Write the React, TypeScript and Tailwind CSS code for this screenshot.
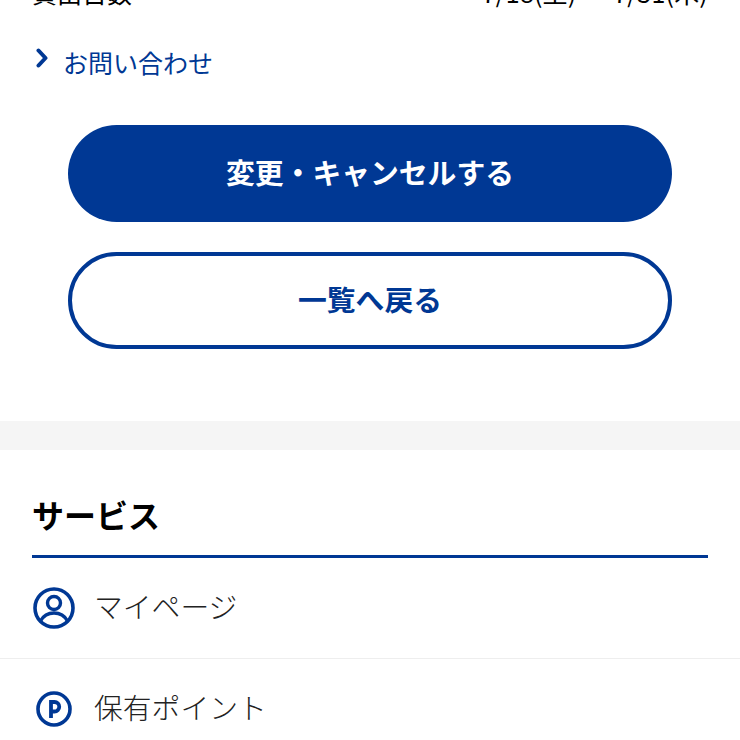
const font = { fontFamily: '"Noto Sans CJK JP", "Noto Sans", sans-serif' };

function ChevronIcon() {
  return (
    <svg width="14" height="20" viewBox="0 0 14 20" fill="none" className="mb-[8px] shrink-0">
      <path d="M3.500 2.500l7 7.500-7 7.500" stroke="#003894" strokeWidth="4" strokeLinecap="round" strokeLinejoin="round" />
    </svg>
  );
}

function UserIcon() {
  return (
    <svg width="42" height="42" viewBox="0 0 42 42" fill="none">
      <circle cx="21" cy="21" r="19" stroke="#003894" strokeWidth="3.600" />
      <circle cx="21" cy="16" r="6.500" stroke="#003894" strokeWidth="3.400" />
      <path d="M7.500 34c3-5.500 8-8 13.500-8s10.500 2.500 13.500 8" stroke="#003894" strokeWidth="3.400" />
    </svg>
  );
}

function PointIcon() {
  return (
    <svg width="36" height="36" viewBox="0 0 36 36" fill="none">
      <circle cx="18" cy="18" r="16" stroke="#003894" strokeWidth="3.600" />
      <path d="M15 27V11h3.500a4.500 4.500 0 0 1 0 9.500H15" stroke="#003894" strokeWidth="3.800" />
    </svg>
  );
}

export default function App() {
  return (
    <div className="h-[740px] w-[740px] overflow-hidden bg-white" style={font}>
      <div className="-mt-[20px] flex justify-between px-8 text-[25px] leading-[24px] text-black">
        <span>貸出日数</span>
        <span className="tracking-[0.2px]">7/18(土) ～ 7/31(木)</span>
      </div>

      <div className="mt-[41px] flex items-center gap-[14px] pl-[35px]">
        <ChevronIcon />
        <span className="text-[25px] leading-[34px] text-[#003894]">お問い合わせ</span>
      </div>

      <div className="mt-[46px] flex flex-col gap-[30px] px-[68px]">
        <button className="h-[97px] rounded-[49px] bg-[#003894] pb-[4px] text-[28.800px] font-bold text-white">
          変更・キャンセルする
        </button>
        <button className="h-[97px] rounded-[49px] border-4 border-[#003894] bg-white pb-[4px] text-[28.800px] font-bold text-[#003894]">
          一覧へ戻る
        </button>
      </div>

      <div className="mt-[72px] h-[29px] bg-[#f5f5f5]" />

      <div className="px-8">
        <h2 className="border-b-[3px] border-[#003894] pt-[40px] pb-[17px] text-[32px] leading-[48px] font-bold text-black">
          サービス
        </h2>
      </div>

      <div className="flex h-[101px] items-center gap-[19px] border-b border-[#eeeeee] pl-[33px]">
        <UserIcon />
        <span className="pb-[4px] text-[28.800px] font-light text-[#222222]">マイページ</span>
      </div>
      <div className="flex h-[100px] items-center gap-[22px] pl-[36px]">
        <PointIcon />
        <span className="pb-[4px] text-[28.800px] font-light text-[#222222]">保有ポイント</span>
      </div>
    </div>
  );
}
